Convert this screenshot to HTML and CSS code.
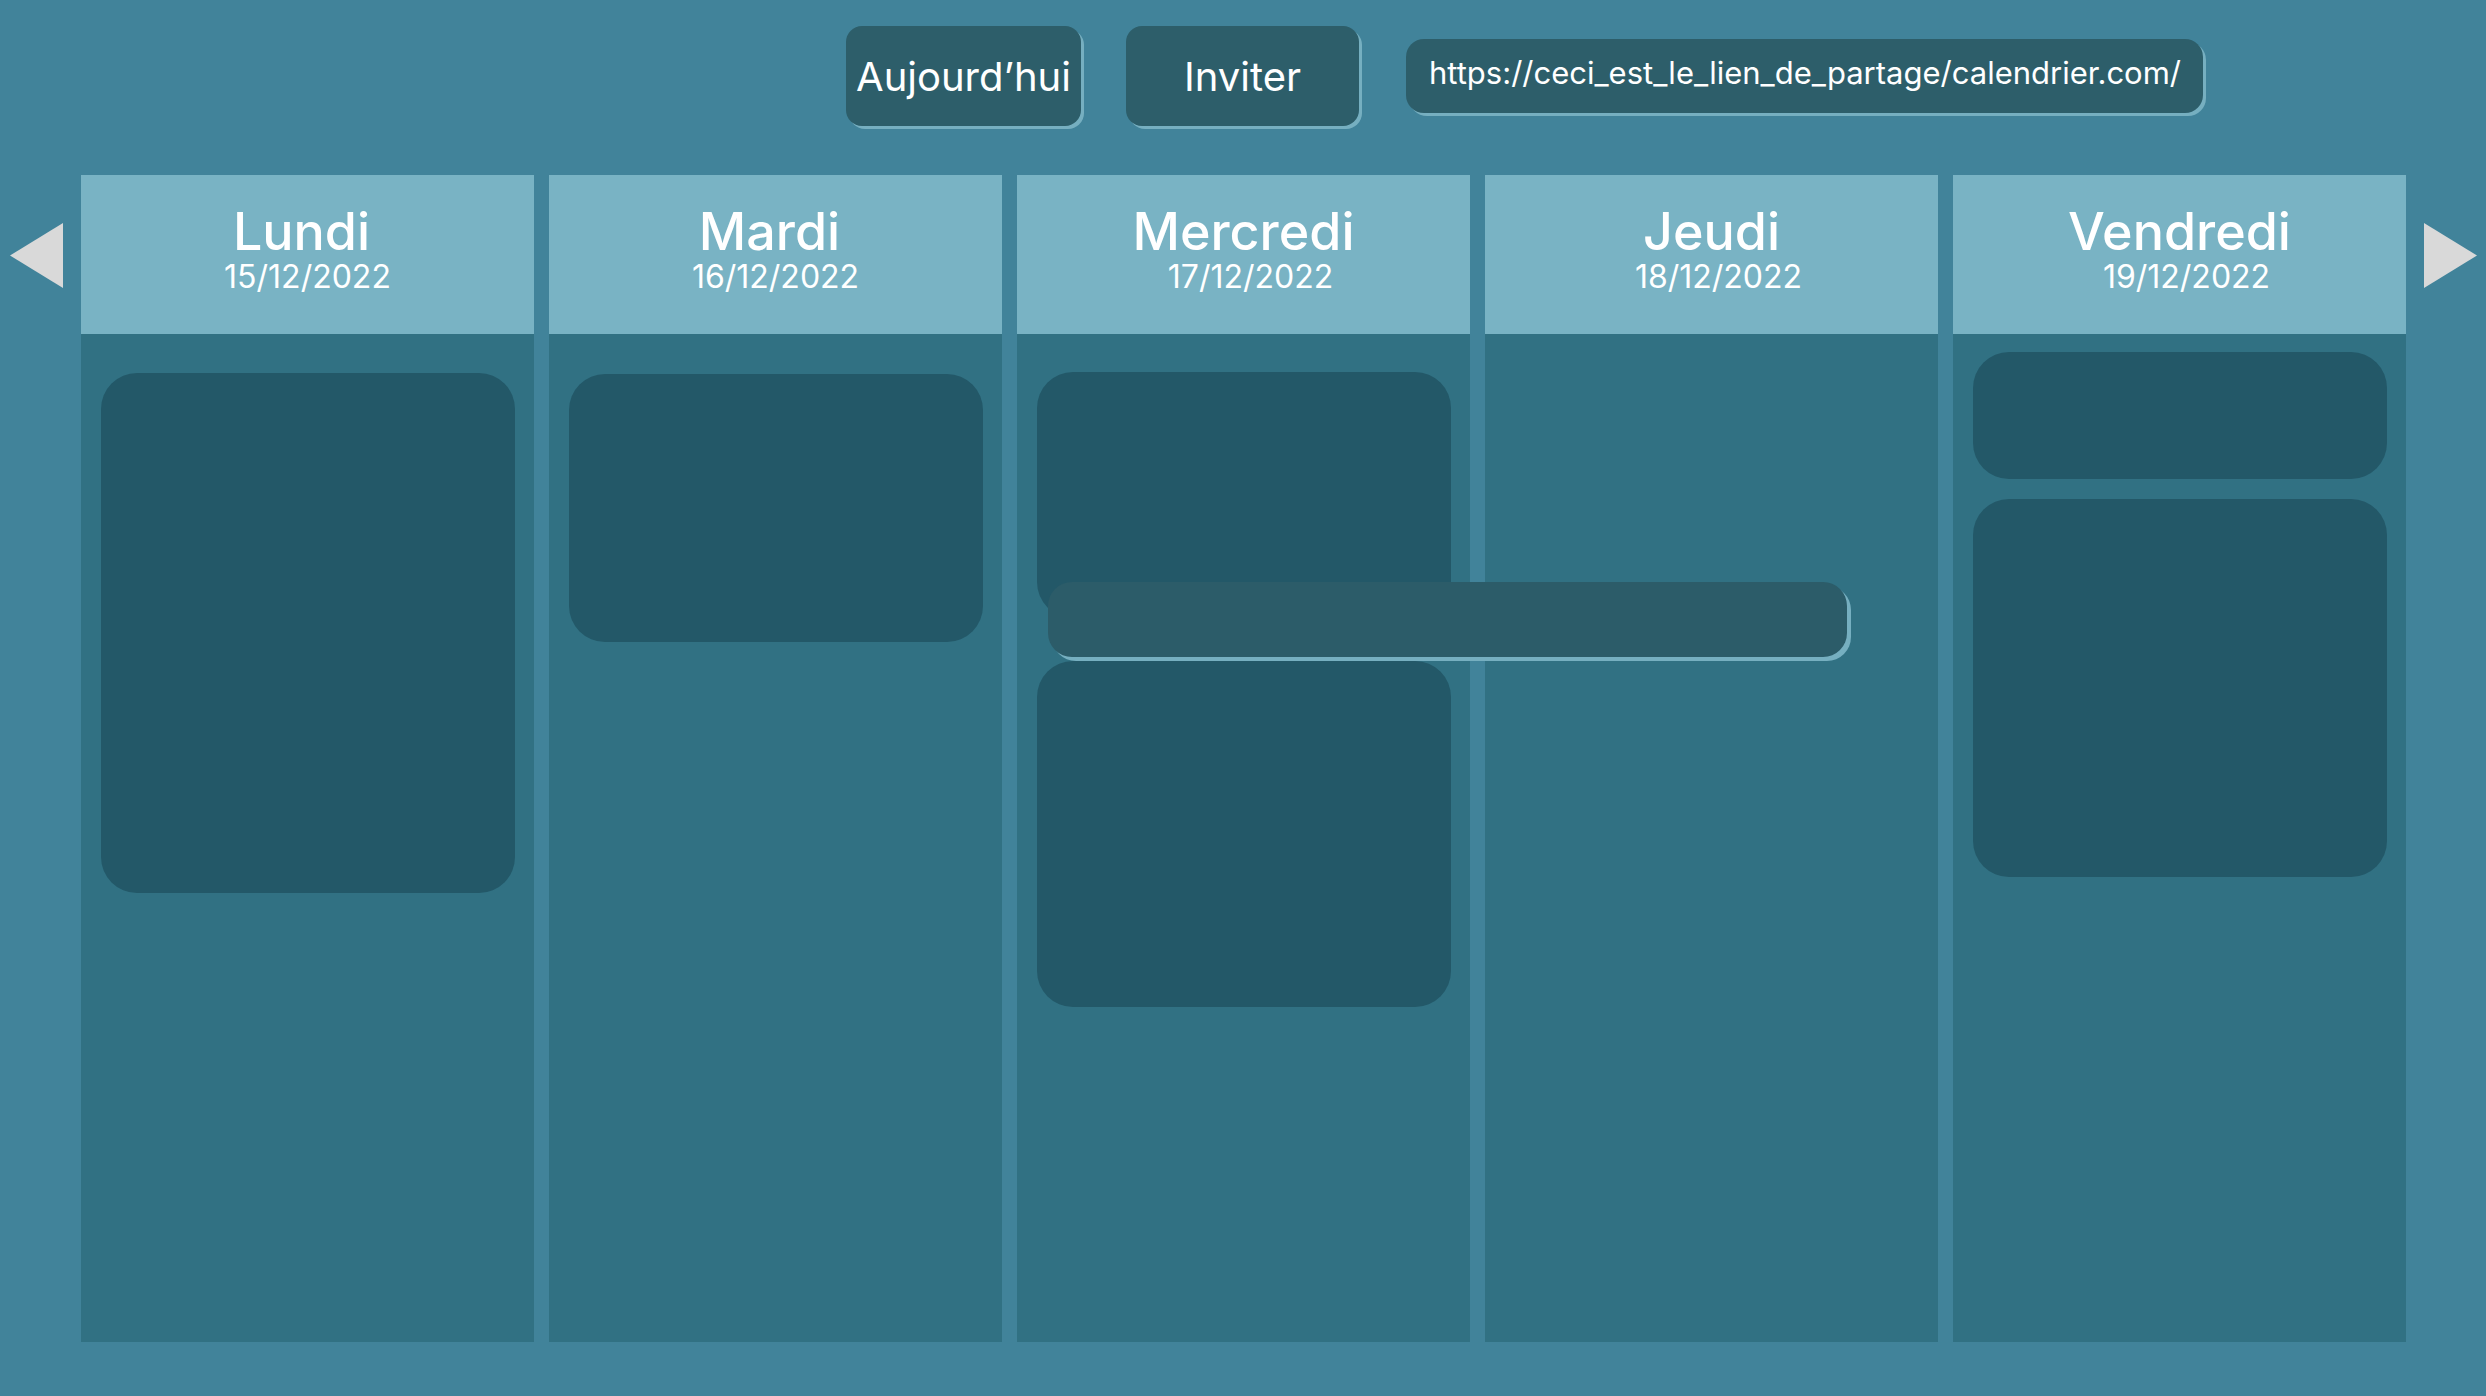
FILE: index.html
```html
<!DOCTYPE html>
<html lang="fr">
<head>
<meta charset="utf-8">
<title>Calendrier</title>
<link rel="stylesheet" href="styles.css">
</head>
<body>
<div class="page">
  <header class="toolbar">
    <button class="btn btn-today">Aujourd’hui</button>
    <button class="btn btn-invite">Inviter</button>
    <div class="share-link">https://ceci_est_le_lien_de_partage/calendrier.com/</div>
  </header>

  <main class="week-row">
    <svg class="arrow arrow-left" viewBox="0 0 53 65" aria-label="Semaine précédente"><polygon points="53,0 53,65 0,32.5"/></svg>

    <div class="week">
      <section class="day">
        <div class="day-head"><div class="day-name name-left">Lundi</div><div class="day-date">15/12/2022</div></div>
        <div class="day-body">
          <div class="event" style="margin-top:39px;height:520px"></div>
        </div>
      </section>
      <section class="day">
        <div class="day-head"><div class="day-name name-left">Mardi</div><div class="day-date">16/12/2022</div></div>
        <div class="day-body">
          <div class="event" style="margin-top:40px;height:268px"></div>
        </div>
      </section>
      <section class="day">
        <div class="day-head"><div class="day-name">Mercredi</div><div class="day-date date-right">17/12/2022</div></div>
        <div class="day-body">
          <div class="event" style="margin-top:38px;height:246px"></div>
          <div class="event" style="margin-top:43px;height:346px"></div>
        </div>
      </section>
      <section class="day">
        <div class="day-head"><div class="day-name">Jeudi</div><div class="day-date date-right">18/12/2022</div></div>
        <div class="day-body"></div>
      </section>
      <section class="day">
        <div class="day-head"><div class="day-name">Vendredi</div><div class="day-date date-right">19/12/2022</div></div>
        <div class="day-body">
          <div class="event" style="margin-top:18px;height:127px"></div>
          <div class="event" style="margin-top:20px;height:378px"></div>
        </div>
      </section>

      <div class="drag-bar"></div>
    </div>

    <svg class="arrow arrow-right" viewBox="0 0 53 65" aria-label="Semaine suivante"><polygon points="0,0 0,65 53,32.5"/></svg>
  </main>
</div>
</body>
</html>
```

FILE: styles.css
```css
* { box-sizing: border-box; }

html, body {
  margin: 0;
  padding: 0;
  background: #41839a;
}

body {
  font-family: "Inter", "Noto Sans", "Liberation Sans", sans-serif;
  color: #ffffff;
  width: 2486px;
  height: 1396px;
  overflow: hidden;
}

.page {
  display: flex;
  flex-direction: column;
}

/* ---------- toolbar ---------- */
.toolbar {
  display: flex;
  align-items: center;
  gap: 45px;
  padding: 26px 0 0 846px;
  height: 126px;
  margin-bottom: 49px;
}

.btn {
  font-family: inherit;
  color: #ffffff;
  background: #2d5e6a;
  border: none;
  border-radius: 16px;
  height: 100px;
  font-size: 40px;
  font-weight: 400;
  padding: 0;
  box-shadow: 3px 3px 0 #76afc0;
  display: flex;
  align-items: center;
  justify-content: center;
}

.btn-today { width: 235px; }
.btn-invite { width: 233px; }

.share-link {
  width: 797px;
  height: 74px;
  background: #2d5e6a;
  border-radius: 18px;
  box-shadow: 3px 3px 0 #76afc0;
  font-size: 31px;
  padding: 0 0 8px 23px;
  display: flex;
  align-items: center;
  white-space: nowrap;
  margin-left: 2px;
}

/* ---------- week ---------- */
.week-row {
  display: flex;
  align-items: flex-start;
}

.arrow {
  width: 53px;
  height: 65px;
  margin-top: 48px;
  fill: #d9d9d9;
  flex: none;
}

.arrow-left { margin-left: 10px; margin-right: 18px; }
.arrow-right { margin-left: 18px; }

.week {
  position: relative;
  display: grid;
  grid-template-columns: repeat(5, 453px);
  gap: 15px;
  height: 1167px;
}

.day {
  display: flex;
  flex-direction: column;
  background: #317183;
}

.day-head {
  height: 159px;
  background: #79b3c4;
  text-align: center;
  padding-top: 31px;
}

.day-name {
  font-size: 52px;
  line-height: 52px;
  font-weight: 500;
}

.name-left { padding-right: 12px; }

.day-date {
  font-size: 32px;
  line-height: 32px;
  font-weight: 400;
  margin-top: 3px;
}

.date-right { padding-left: 14px; }

.day-body {
  flex: 1;
  display: flex;
  flex-direction: column;
  padding: 0 19px 0 20px;
}

.event {
  background: #235868;
  border-radius: 36px;
  flex: none;
}

.drag-bar {
  position: absolute;
  left: 967px;
  top: 407px;
  width: 799px;
  height: 75px;
  background: #2c5c69;
  border-radius: 24px;
  box-shadow: 4px 4px 0 #76afc0;
}
```
